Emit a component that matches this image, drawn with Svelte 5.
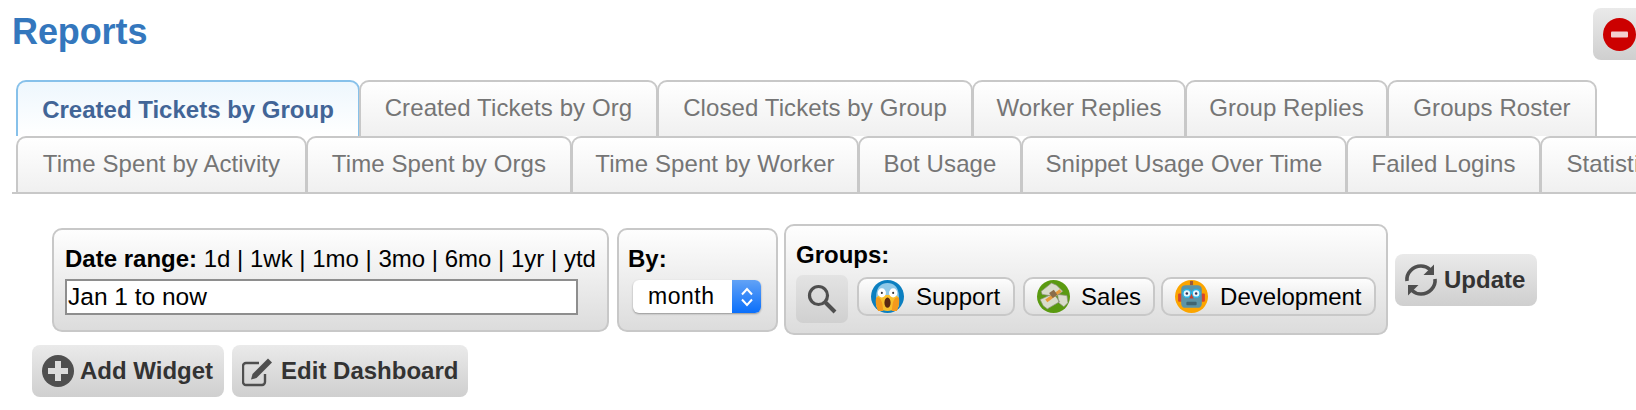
<script>
  const row1 = [['Created Tickets by Group',344],['Created Tickets by Org',299],['Closed Tickets by Group',316],['Worker Replies',214],['Group Replies',203],['Groups Roster',210]];
  const row2 = [['Time Spent by Activity',291],['Time Spent by Orgs',266],['Time Spent by Worker',288],['Bot Usage',164],['Snippet Usage Over Time',326],['Failed Logins',195],['Statistics',150]];
  const ranges = ['1d','1wk','1mo','3mo','6mo','1yr','ytd'];
</script>

<div class="page">
  <header class="head">
    <h1>Reports</h1>
    <button class="btn stop" aria-label="Remove">
      <svg viewBox="0 0 33 33" width="33" height="33"><circle cx="16.500" cy="16.500" r="16.500" fill="#cc0000"/><rect x="8" y="13.500" width="17" height="6" rx="1" fill="#f3d0d0"/></svg>
    </button>
  </header>

  <nav class="tabs">
    <div class="row">
      {#each row1 as [t, w], i}
        <div class="tab" class:active={i === 0} style:width="{w}px">{t}</div>
      {/each}
    </div>
    <div class="row second">
      {#each row2 as [t, w]}
        <div class="tab" style:width="{w}px">{t}</div>
      {/each}
    </div>
  </nav>

  <div class="filters">
    <fieldset class="box date">
      <div class="line"><b>Date range:</b>{' '}{ranges.join(' | ')}</div>
      <input class="range" value="Jan 1 to now" />
    </fieldset>
    <fieldset class="box by">
      <div class="line"><b>By:</b></div>
      <div class="select"><span class="val">month</span><span class="arrows"><svg viewBox="0 0 14 24" width="14" height="24" fill="none" stroke="#fff" stroke-width="2"><path d="M2 9.500 7 4l5 5.500M2 14.500 7 20l5-5.500"/></svg></span></div>
    </fieldset>
    <fieldset class="box groups">
      <div class="line"><b>Groups:</b></div>
      <div class="chips">
        <button class="search" aria-label="Search">
          <svg viewBox="0 0 32 32" width="32" height="32" fill="none" stroke="#4f4f4f"><circle cx="12.500" cy="12.500" r="9" stroke-width="3.200"/><path d="M19.500 19.500 29 29" stroke-width="4"/></svg>
        </button>
        <div class="chip support">
          <svg class="av" viewBox="0 0 32 32"><circle cx="16" cy="16" r="16" fill="#0b7fc0"/><path d="M5 16C5 7 10 3 16 3s11 4 11 13v10H5z" fill="#8fc9e8"/><path d="M6 16c0 10 4 14 10 14s10-4 10-14c-3-2-17-2-20 0z" fill="#f7c02c"/><ellipse cx="10.500" cy="12.500" rx="4" ry="4.400" fill="#fff"/><ellipse cx="21.500" cy="12.500" rx="4" ry="4.400" fill="#fff"/><circle cx="10.500" cy="12.500" r="1" fill="#333"/><circle cx="21.500" cy="12.500" r="1" fill="#333"/><ellipse cx="16" cy="22" rx="3" ry="5" fill="#5b2a12"/><path d="M5 17c3-1 5 2 6 6l1 7H7c-2-3-3-9-2-13zM27 17c-3-1-5 2-6 6l-1 7h5c2-3 3-9 2-13z" fill="#f39a1d"/></svg>
          <span>Support</span>
        </div>
        <div class="chip sales">
          <svg class="av" viewBox="0 0 32 32"><circle cx="16" cy="16" r="16" fill="#5a9a10"/><path d="M4 11 14 3l5 2 6 6-7 5-6-1-7-1zM3 19l13-6 6 8-12 7-4-3zM20 14l9 1 1 7-4 4-5-4z" fill="#d9dccb" stroke="#8a8f78" stroke-width=".7"/><path d="M8 19 22 9l1.800 2.500L10 21.500z" fill="#e89a3a"/><rect x="13" y="10.500" width="5.500" height="6" fill="#8a6d4a" transform="rotate(-35 15.700 13.500)"/></svg>
          <span>Sales</span>
        </div>
        <div class="chip dev">
          <svg class="av" viewBox="0 0 32 32"><circle cx="16" cy="16" r="16" fill="#fba500"/><rect x="14.500" y="1" width="3" height="4" fill="#9c5a3c"/><rect x="3" y="13" width="4" height="8" rx="1" fill="#d6452c"/><rect x="25" y="13" width="4" height="8" rx="1" fill="#d6452c"/><rect x="6" y="5" width="20" height="22" rx="4" fill="#5c94a6"/><circle cx="11.500" cy="13" r="3.800" fill="#e8f6fb" stroke="#28b5e8" stroke-width="1.400"/><circle cx="20.500" cy="13" r="3.800" fill="#e8f6fb" stroke="#28b5e8" stroke-width="1.400"/><circle cx="11.500" cy="13" r="1.200" fill="#335"/><circle cx="20.500" cy="13" r="1.200" fill="#335"/><path d="M16 13l2 5h-4z" fill="#c8402e"/><rect x="11" y="21" width="10" height="3.500" rx="1" fill="#3f6572"/></svg>
          <span>Development</span>
        </div>
      </div>
    </fieldset>
    <button class="btn update">
      <svg viewBox="0 0 34 34" width="34" height="34" fill="none" stroke="#4f4f4f" stroke-width="3.600"><path d="M3 18C2 10 9 3 17 3c3.500 0 6.500 1.200 9 3.500"/><path d="M31 16c1 8-6 15-14 15-3.500 0-6.500-1.200-9-3.500"/><path d="M30 1.500V12H19.500z" fill="#4f4f4f" stroke="none"/><path d="M4 32.500V22h10.500z" fill="#4f4f4f" stroke="none"/></svg>
      <span>Update</span>
    </button>
  </div>

  <div class="actions">
    <button class="btn add">
      <svg viewBox="0 0 32 32" width="32" height="32"><circle cx="16" cy="16" r="16" fill="#4f4f4f"/><path d="M13 6h6v7h7v6h-7v7h-6v-7H6v-6h7z" fill="#dcdcdc"/></svg>
      <span>Add Widget</span>
    </button>
    <button class="btn edit">
      <svg viewBox="0 0 32 32" width="32" height="32" fill="none"><path d="M23 19v8a3 3 0 0 1-3 3H4a3 3 0 0 1-3-3V11a3 3 0 0 1 3-3h13" stroke="#4f4f4f" stroke-width="2.400"/><path d="M9 24.500l1.500-5.500L26 3.500l4 4L14.500 23z" fill="#4f4f4f"/></svg>
      <span>Edit Dashboard</span>
    </button>
  </div>
</div>

<style>
  :global(body) { margin: 0; background: #fff; overflow: hidden; }
  .page { width: 1636px; height: 410px; overflow: hidden; font-family: "Liberation Sans", Arial, sans-serif; color: #000; }
  .head { display: flex; justify-content: space-between; align-items: flex-start; padding: 8px 0 0 12px; height: 80px; box-sizing: border-box; }
  h1 { margin: 5px 0 0; font-size: 36px; line-height: 37px; font-weight: 700; color: #3477bd; letter-spacing: -0.1px; }
  .btn.stop { width: 80px; height: 52px; flex: none; margin-right: -37px; justify-content: flex-start; padding: 0 0 0 10px; }
  .tabs { border-bottom: 2px solid #c8c8c8; margin-left: 12px; padding-left: 4px; overflow: hidden; }
  .row { display: flex; height: 56px; align-items: flex-end; }
  .tab { height: 56px; box-sizing: border-box; padding: 12px 0 0; text-align: center; font-size: 24px; line-height: 28px; letter-spacing: .1px; color: #757575; white-space: nowrap; flex: none; border: 2px solid #c8c8c8; border-bottom: 0; border-radius: 10px 10px 0 0; background: linear-gradient(#fff, #f0f0f0); }
  .tab + .tab { margin-left: -1px; }
  .tab.active { color: #426597; font-weight: 700; letter-spacing: 0; border-color: #87c1ea; background: linear-gradient(#eef7fd, #fff); padding-top: 14px; }
  .filters { display: flex; align-items: flex-start; margin: 30px 0 0 52px; height: 111px; }
  .box { margin: 0; border: 2px solid #c8c8c8; border-radius: 10px; background: linear-gradient(#fefefe, #dcdcdc); padding: 15px 11px 0; box-sizing: border-box; min-width: 0; }
  .line { font-size: 24px; line-height: 27px; white-space: nowrap; }
  .date { width: 557px; height: 104px; margin-top: 4px; }
  .range { display: block; box-sizing: border-box; width: 513px; height: 36px; margin-top: 7px; border: 2px solid #8e8e8e; padding: 0 1px; font: 24.500px "Liberation Sans", Arial, sans-serif; background: #fff; color: #000; border-radius: 0; outline: none; }
  .by { width: 161px; height: 104px; margin: 4px 0 0 8px; padding-left: 9px; }
  .select { display: flex; width: 128px; height: 33px; margin: 8px 0 0 5px; border-radius: 6px; overflow: hidden; background: #fff; box-shadow: 0 1px 2px rgba(0,0,0,.35); font-size: 23px; }
  .val { flex: 1; padding-left: 15px; line-height: 33px; letter-spacing: .5px; }
  .arrows { width: 29px; display: flex; align-items: center; justify-content: center; background: linear-gradient(#62a2f6, #0a6ffb); }
  .groups { width: 604px; height: 111px; margin-left: 6px; padding: 15px 5px 0 10px; }
  .chips { display: flex; align-items: flex-start; gap: 8px; margin-top: 7px; }
  .search { flex: none; width: 52px; height: 48px; margin-right: 1px; border: 0; border-radius: 7px; background: linear-gradient(#e3e3e3, #d0d0d0); padding: 0; display: flex; align-items: center; justify-content: center; }
  .chip { flex: none; display: flex; align-items: center; gap: 12px; height: 39px; box-sizing: border-box; border: 2px solid #c8c8c8; border-radius: 10px; padding: 0 12px; font-size: 24px; background: linear-gradient(#fdfdfd, #e0e0e0); margin-top: 2px; white-space: nowrap; }
  .support { padding-right: 13px; }
  .sales { gap: 11px; }
  .dev { margin-left: -2px; }
  .av { width: 33px; height: 33px; flex: none; }
  .btn { display: inline-flex; align-items: center; gap: 6px; height: 52px; padding: 0 11px; border: 0; border-radius: 8px; background: linear-gradient(#eaeaea, #cfcfcf); color: #333; font: 700 24px "Liberation Sans", Arial, sans-serif; white-space: nowrap; }
  .update { margin: 30px 0 0 7px; padding: 0 12px 0 9px; }
  .actions { display: flex; gap: 8px; margin: 10px 0 0 32px; }
  .add { padding: 0 11px 0 10px; }
  .edit { padding: 0 10px 0 10px; gap: 7px; }
</style>
